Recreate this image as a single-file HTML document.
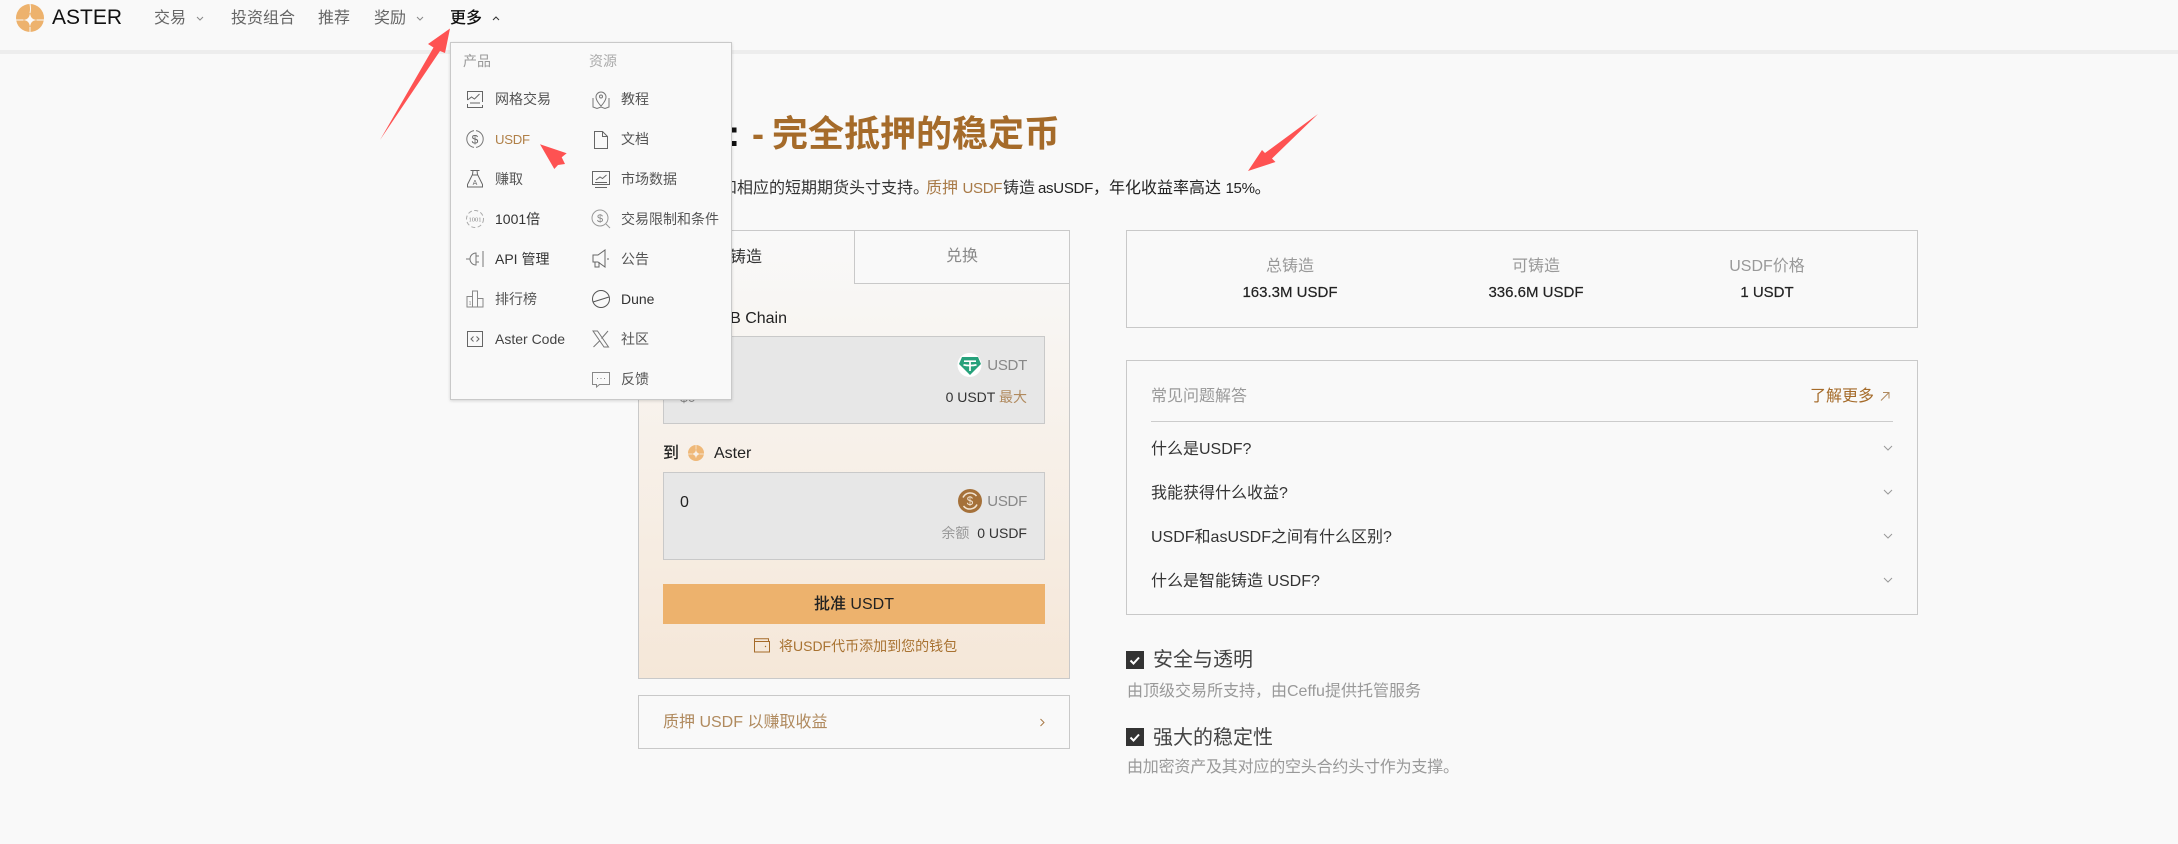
<!DOCTYPE html>
<html lang="zh-CN"><head><meta charset="utf-8"><title>USDF</title>
<style>
html,body{margin:0;padding:0;background:#f9f9f9}
body{width:2178px;height:844px;position:relative;overflow:hidden;font-family:"Liberation Sans","Noto Sans CJK SC",sans-serif;color:#333;font-size:16px}
.t{position:absolute;white-space:nowrap;line-height:24px;height:24px}
.b{position:absolute;box-sizing:border-box;border:1px solid #c9c9c9}
.g{color:#999}.br{color:#a56b2a}
.m{font-size:14px;color:#555}
.r{text-align:right}.c{text-align:center}
.L{font-size:.94em;letter-spacing:-.02em}
svg{position:absolute;left:0;top:0;overflow:visible}
</style></head><body>

<div style="position:absolute;left:0;top:50px;width:2178px;height:4px;background:#ededed"></div>

<svg width="60" height="40" viewBox="0 0 60 40">
<circle cx="30" cy="18" r="14" fill="#edb26d"/>
<path d="M30 13C30.700 17.500 32 19.300 36.500 20C32 20.700 30.700 22.500 30 27C29.300 22.500 28 20.700 23.500 20C28 19.300 29.300 17.500 30 13Z" fill="#f9f9f9"/>
<path d="M30 4Q31 9 30 13M30 27V32M16 20H23.500M36.500 20H44" stroke="#f9f9f9" stroke-width="1" fill="none"/>
</svg>
<span class="t" style="left:52px;top:6px;font-size:21px;color:#111">ASTER</span>
<span class="t" style="left:154px;top:7px;color:#666">交易</span>
<span class="t" style="left:231px;top:7px;color:#666">投资组合</span>
<span class="t" style="left:318px;top:7px;color:#666">推荐</span>
<span class="t" style="left:374px;top:7px;color:#666">奖励</span>
<span class="t" style="left:450px;top:7px;color:#111;font-weight:500">更多</span>
<svg width="600" height="40"><path d="M197 17l3 3 3-3M417 17l3 3 3-3" fill="none" stroke="#888"/><path d="M493 20l3-3 3 3" fill="none" stroke="#333"/></svg>

<!-- title -->
<span class="t" style="left:630px;width:100px;top:116px;height:36px;line-height:36px;font-size:36px;font-weight:700;color:#111;text-align:right">USDF:</span>
<span class="t br" style="left:752px;top:116px;height:36px;line-height:36px;font-size:36px;font-weight:700;color:#a56b2a">-</span>
<span class="t br" style="left:772px;top:116px;height:36px;line-height:36px;font-size:36px;font-weight:700;color:#a56b2a">完全抵押的稳定币</span>

<span class="t" style="left:641px;top:177px;color:#333">由加密资产和</span>
<span class="t" style="left:737px;top:177px;color:#333">相应的短期期货头寸支持。</span>
<span class="t" style="left:926px;top:177px;color:#a87a47">质押 <span class="L">USDF</span></span>
<span class="t" style="left:1003px;top:177px;color:#333">铸造</span>
<span class="t" style="left:1038px;top:177px;color:#222"><span class="L">asUSDF</span>，年化收益率高达 <span class="L">15%</span>。</span>

<!-- card -->
<div class="b" style="left:638px;top:230px;width:432px;height:449px;background:linear-gradient(#f9f9f9,#f5e7d8)"></div>
<div class="b" style="left:854px;top:230px;width:216px;height:54px;background:#f9f9f9"></div>
<span class="t c" style="left:638px;width:216px;top:246px;color:#333">铸造</span>
<span class="t c" style="left:854px;width:216px;top:245px;color:#888">兑换</span>
<span class="t" style="left:663px;top:307px;color:#222">从</span>
<span class="t r" style="left:663px;width:124px;top:307px;color:#222">BNB Chain</span>
<div class="b" style="left:663px;top:336px;width:382px;height:88px;background:#e7e7e7"></div>
<span class="t" style="left:680px;top:385px;font-size:14px;color:#888">$0</span>
<span class="t r" style="left:960px;width:67px;top:354px;color:#888"><span class="L">USDT</span></span>
<span class="t r" style="left:900px;width:127px;top:385px;font-size:14px;color:#333">0 USDT <span style="color:#b08a5e">最大</span></span>
<svg width="2178" height="844">
<circle cx="969.500" cy="365" r="12" fill="#fff"/>
<path d="M962 357h16l3 7-11 11-11-11z" fill="#26a17b"/>
<path d="M964 361.200h12M970 361v10M963.500 364.800c3.500 1 9.500 1 13 0" stroke="#fff" stroke-width="1.700" fill="none"/>
</svg>

<span class="t" style="left:663px;top:442px;color:#222;font-weight:500">到</span>
<svg width="2178" height="844">
<circle cx="696" cy="453" r="8" fill="#efb878"/>
<path d="M696 449.500C696.500 452 697.200 453.300 700.500 454C697.200 454.700 696.500 456 696 458.500C695.500 456 694.800 454.700 691.500 454C694.800 453.300 695.500 452 696 449.500Z" fill="#f8efe5"/>
<path d="M696 445V449.500M688 454H692M700 454H704" stroke="#f8efe5" stroke-width=".7"/>
</svg>
<span class="t" style="left:714px;top:442px;color:#222">Aster</span>
<div class="b" style="left:663px;top:472px;width:382px;height:88px;background:#e7e7e7"></div>
<span class="t" style="left:680px;top:491px;color:#222">0</span>
<span class="t r" style="left:960px;width:67px;top:490px;color:#888"><span class="L">USDF</span></span>
<span class="t r" style="left:900px;width:127px;top:521px;font-size:14px;color:#333"><span style="color:#999">余额</span>&nbsp; 0 USDF</span>
<svg width="2178" height="844">
<circle cx="970" cy="501" r="12" fill="#a5713a"/>
<path d="M963 497.500A8 8 0 0 1 976.500 496M977 504.500A8 8 0 0 1 963.500 506" stroke="#f2e4d2" stroke-width="1.500" fill="none"/>
<text x="970" y="505" text-anchor="middle" font-size="11.500" font-family="Liberation Sans" fill="#f2e4d2">$</text>
</svg>

<div style="position:absolute;left:663px;top:584px;width:382px;height:40px;background:#edb26d;line-height:42px;text-align:center;color:#222;font-weight:500">批准 USDT</div>
<svg width="2178" height="844"><path d="M754.500 641.500h15v10.500h-15zM754.500 641.500v-2.800h14v2.800" fill="none" stroke="#a56b2a"/><circle cx="765.500" cy="646.500" r=".7" fill="#a56b2a"/></svg>
<span class="t" style="left:779px;top:634px;font-size:14px;color:#a87231">将USDF代币添加到您的钱包</span>

<div class="b" style="left:638px;top:695px;width:432px;height:54px;background:#f9f9f9"></div>
<span class="t" style="left:663px;top:711px;color:#b08a5e">质押 USDF 以赚取收益</span>
<svg width="2178" height="844"><path d="M1040.500 719l3.500 3.500-3.500 3.500" fill="none" stroke="#a87a47" stroke-width="1"/></svg>

<!-- stats -->
<div class="b" style="left:1126px;top:230px;width:792px;height:98px"></div>
<span class="t c g" style="left:1190px;width:200px;top:255px">总铸造</span>
<span class="t c" style="left:1436px;width:200px;top:255px;color:#999">可铸造</span>
<span class="t c g" style="left:1667px;width:200px;top:255px">USDF价格</span>
<span class="t c" style="left:1190px;width:200px;top:281px;font-size:15px;-webkit-text-stroke:.2px #222;color:#222">163.3M USDF</span>
<span class="t c" style="left:1436px;width:200px;top:281px;font-size:15px;-webkit-text-stroke:.2px #222;color:#222">336.6M USDF</span>
<span class="t c" style="left:1667px;width:200px;top:281px;font-size:15px;-webkit-text-stroke:.2px #222;color:#222">1 USDT</span>

<!-- faq -->
<div class="b" style="left:1126px;top:360px;width:792px;height:255px"></div>
<span class="t g" style="left:1151px;top:385px">常见问题解答</span>
<span class="t br" style="left:1810px;top:385px">了解更多</span>
<div style="position:absolute;left:1151px;top:421px;width:742px;height:1px;background:#ccc"></div>
<span class="t" style="left:1151px;top:438px">什么是USDF?</span>
<span class="t" style="left:1151px;top:482px">我能获得什么收益?</span>
<span class="t" style="left:1151px;top:526px">USDF和asUSDF之间有什么区别?</span>
<span class="t" style="left:1151px;top:570px">什么是智能铸造 USDF?</span>
<svg width="2178" height="844">
<path d="M1881 400.500l8-8M1883 392.500h6v6" fill="none" stroke="#b08a5e"/>
<path d="M1884 446l4 4 4-4M1884 490l4 4 4-4M1884 534l4 4 4-4M1884 578l4 4 4-4" fill="none" stroke="#999"/>
</svg>

<!-- features -->
<svg width="2178" height="844">
<rect x="1126" y="651" width="18" height="18" fill="#333"/><path d="M1130.500 660.500l3 3 5.500-6" fill="none" stroke="#fff" stroke-width="2"/>
<rect x="1126" y="728" width="18" height="18" fill="#333"/><path d="M1130.500 737.500l3 3 5.500-6" fill="none" stroke="#fff" stroke-width="2"/>
</svg>
<span class="t" style="left:1153px;top:648px;font-size:20px;color:#444">安全与透明</span>
<span class="t g" style="left:1127px;top:680px">由顶级交易所支持，由Ceffu提供托管服务</span>
<span class="t" style="left:1153px;top:726px;font-size:20px;color:#444">强大的稳定性</span>
<span class="t g" style="left:1127px;top:756px;letter-spacing:-.2px">由加密资产及其对应的空头合约头寸作为支撑。</span>

<!-- dropdown -->
<div class="b" style="left:450px;top:42px;width:282px;height:358px;background:#f9f9f9;box-shadow:0 1px 3px rgba(0,0,0,.15)"></div>
<span class="t g" style="left:463px;top:49px;font-size:14px">产品</span>
<span class="t g" style="left:589px;top:49px;font-size:14px;color:#aaa">资源</span>

<span class="t m" style="left:495px;top:87px">网格交易</span>
<span class="t m" style="left:495px;top:127px;color:#b08048"><span class="L">USDF</span></span>
<span class="t m" style="left:495px;top:167px">赚取</span>
<span class="t m" style="left:495px;top:207px;color:#333">1001倍</span>
<span class="t m" style="left:495px;top:247px;color:#333">API 管理</span>
<span class="t m" style="left:495px;top:287px">排行榜</span>
<span class="t m" style="left:495px;top:327px;color:#444">Aster Code</span>
<span class="t m" style="left:621px;top:87px">教程</span>
<span class="t m" style="left:621px;top:127px">文档</span>
<span class="t m" style="left:621px;top:167px">市场数据</span>
<span class="t m" style="left:621px;top:207px">交易限制和条件</span>
<span class="t m" style="left:621px;top:247px">公告</span>
<span class="t m" style="left:621px;top:287px;color:#333">Dune</span>
<span class="t m" style="left:621px;top:327px">社区</span>
<span class="t m" style="left:621px;top:367px">反馈</span>

<svg width="2178" height="844" fill="none" stroke="#666" stroke-width="1">
<!-- grid -->
<path d="M467.500 100V91.500h15V102M467.500 104v3.500h15V105M467.500 100l4-3 3 2 5-5M470 103h10"/>
<!-- usdf -->
<path d="M474 130.600A8.500 8.500 0 0 0 474 147.400M476 130.600A8.500 8.500 0 0 1 476 147.400" stroke="#777"/>
<text x="475" y="143.500" text-anchor="middle" font-size="12" font-family="Liberation Sans" fill="#666" stroke="none">$</text>
<!-- earn -->
<path d="M470.500 170.500h9M473 170.500l-.5 4 -5 10v2.500h15v-2.500l-5-10-.5-4M472.500 175h5"/>
<text x="475" y="185" text-anchor="middle" font-size="7" font-family="Liberation Sans" fill="#666" stroke="none">A</text>
<!-- 1001 -->
<circle cx="475" cy="219" r="8.500" stroke="#aaa" stroke-dasharray="4 2.500"/>
<text x="475" y="221.500" text-anchor="middle" font-size="6.500" font-family="Liberation Serif" fill="#888" stroke="none">1001</text>
<!-- api -->
<path d="M466 259h3.500M476 253a6 6 0 1 0 0 12V253zM476 256h3M476 262h3M483 251v16" stroke="#777"/>
<!-- rank -->
<path d="M467 296.500h5.500v10.500H467zM472.500 291h5v16h-5zM477.500 298.500h5.500v8.500h-5.500z" stroke="#888"/>
<text x="470" y="305" text-anchor="middle" font-size="6" font-family="Liberation Serif" fill="#777" stroke="none">1</text>
<!-- code -->
<rect x="467.500" y="331.500" width="15" height="15"/>
<path d="M473.500 336.500l-2.500 2.500 2.500 2.500M476.500 336.500l2.500 2.500-2.500 2.500"/>
<!-- tutorial -->
<path d="M601 106s-5-5-5-9a5 5 0 0 1 10 0c0 4-5 9-5 9zM593 98v9l4 1.500 4-1.500 4 1.500 4-1.500V98" stroke="#777"/>
<circle cx="601" cy="96.500" r="1.500" stroke="#777"/>
<!-- doc -->
<path d="M594.500 131.500h8l5 5v12h-13zM602.500 131.500v5h5" stroke="#666"/>
<!-- market -->
<path d="M592.500 171.500h17v13h-17zM595 187.500h12M595 182.500h12M596 180l4-3 2.500 1.500 4-3.500" stroke="#666"/>
<!-- limits -->
<circle cx="600" cy="218" r="8" stroke="#999"/>
<path d="M606 224l4 4" stroke="#999"/>
<text x="600" y="222" text-anchor="middle" font-size="11" font-family="Liberation Sans" fill="#888" stroke="none">$</text>
<!-- announcement -->
<path d="M593 255h5l7-5v17l-7-5h-5zM595 262v5h4v-5M608 258v2" stroke="#666"/>
<!-- dune -->
<circle cx="601" cy="299" r="8.500" stroke="#555"/>
<path d="M593 302l16-5" stroke="#555"/>
<!-- x -->
<path d="M593 331h4.500l11 16H604zM608 331l-6.500 7.500M600 340.500l-6.500 6.500" stroke="#777"/>
<!-- feedback -->
<path d="M592.500 372.500h17v12h-10l-3 2.500v-2.500h-4z" stroke="#888"/>
<path d="M597 378.500h1M600.500 378.500h1M604 378.500h1" stroke="#888"/>
</svg>

<!-- red arrows -->
<svg width="2178" height="844">
<path d="M450 28.500L428 44L433.500 47.500L380 140L440 51L445 53Z" fill="#fe5252"/>
<path d="M540 144.300L566.700 153.300L561.700 157.300L565 164L558 165L554.300 169Z" fill="#fe5252"/>
<path d="M1318 114L1265 153L1262 150L1248 171L1275.500 162L1272 158.500Z" fill="#fe5252"/>
</svg>
</body></html>
